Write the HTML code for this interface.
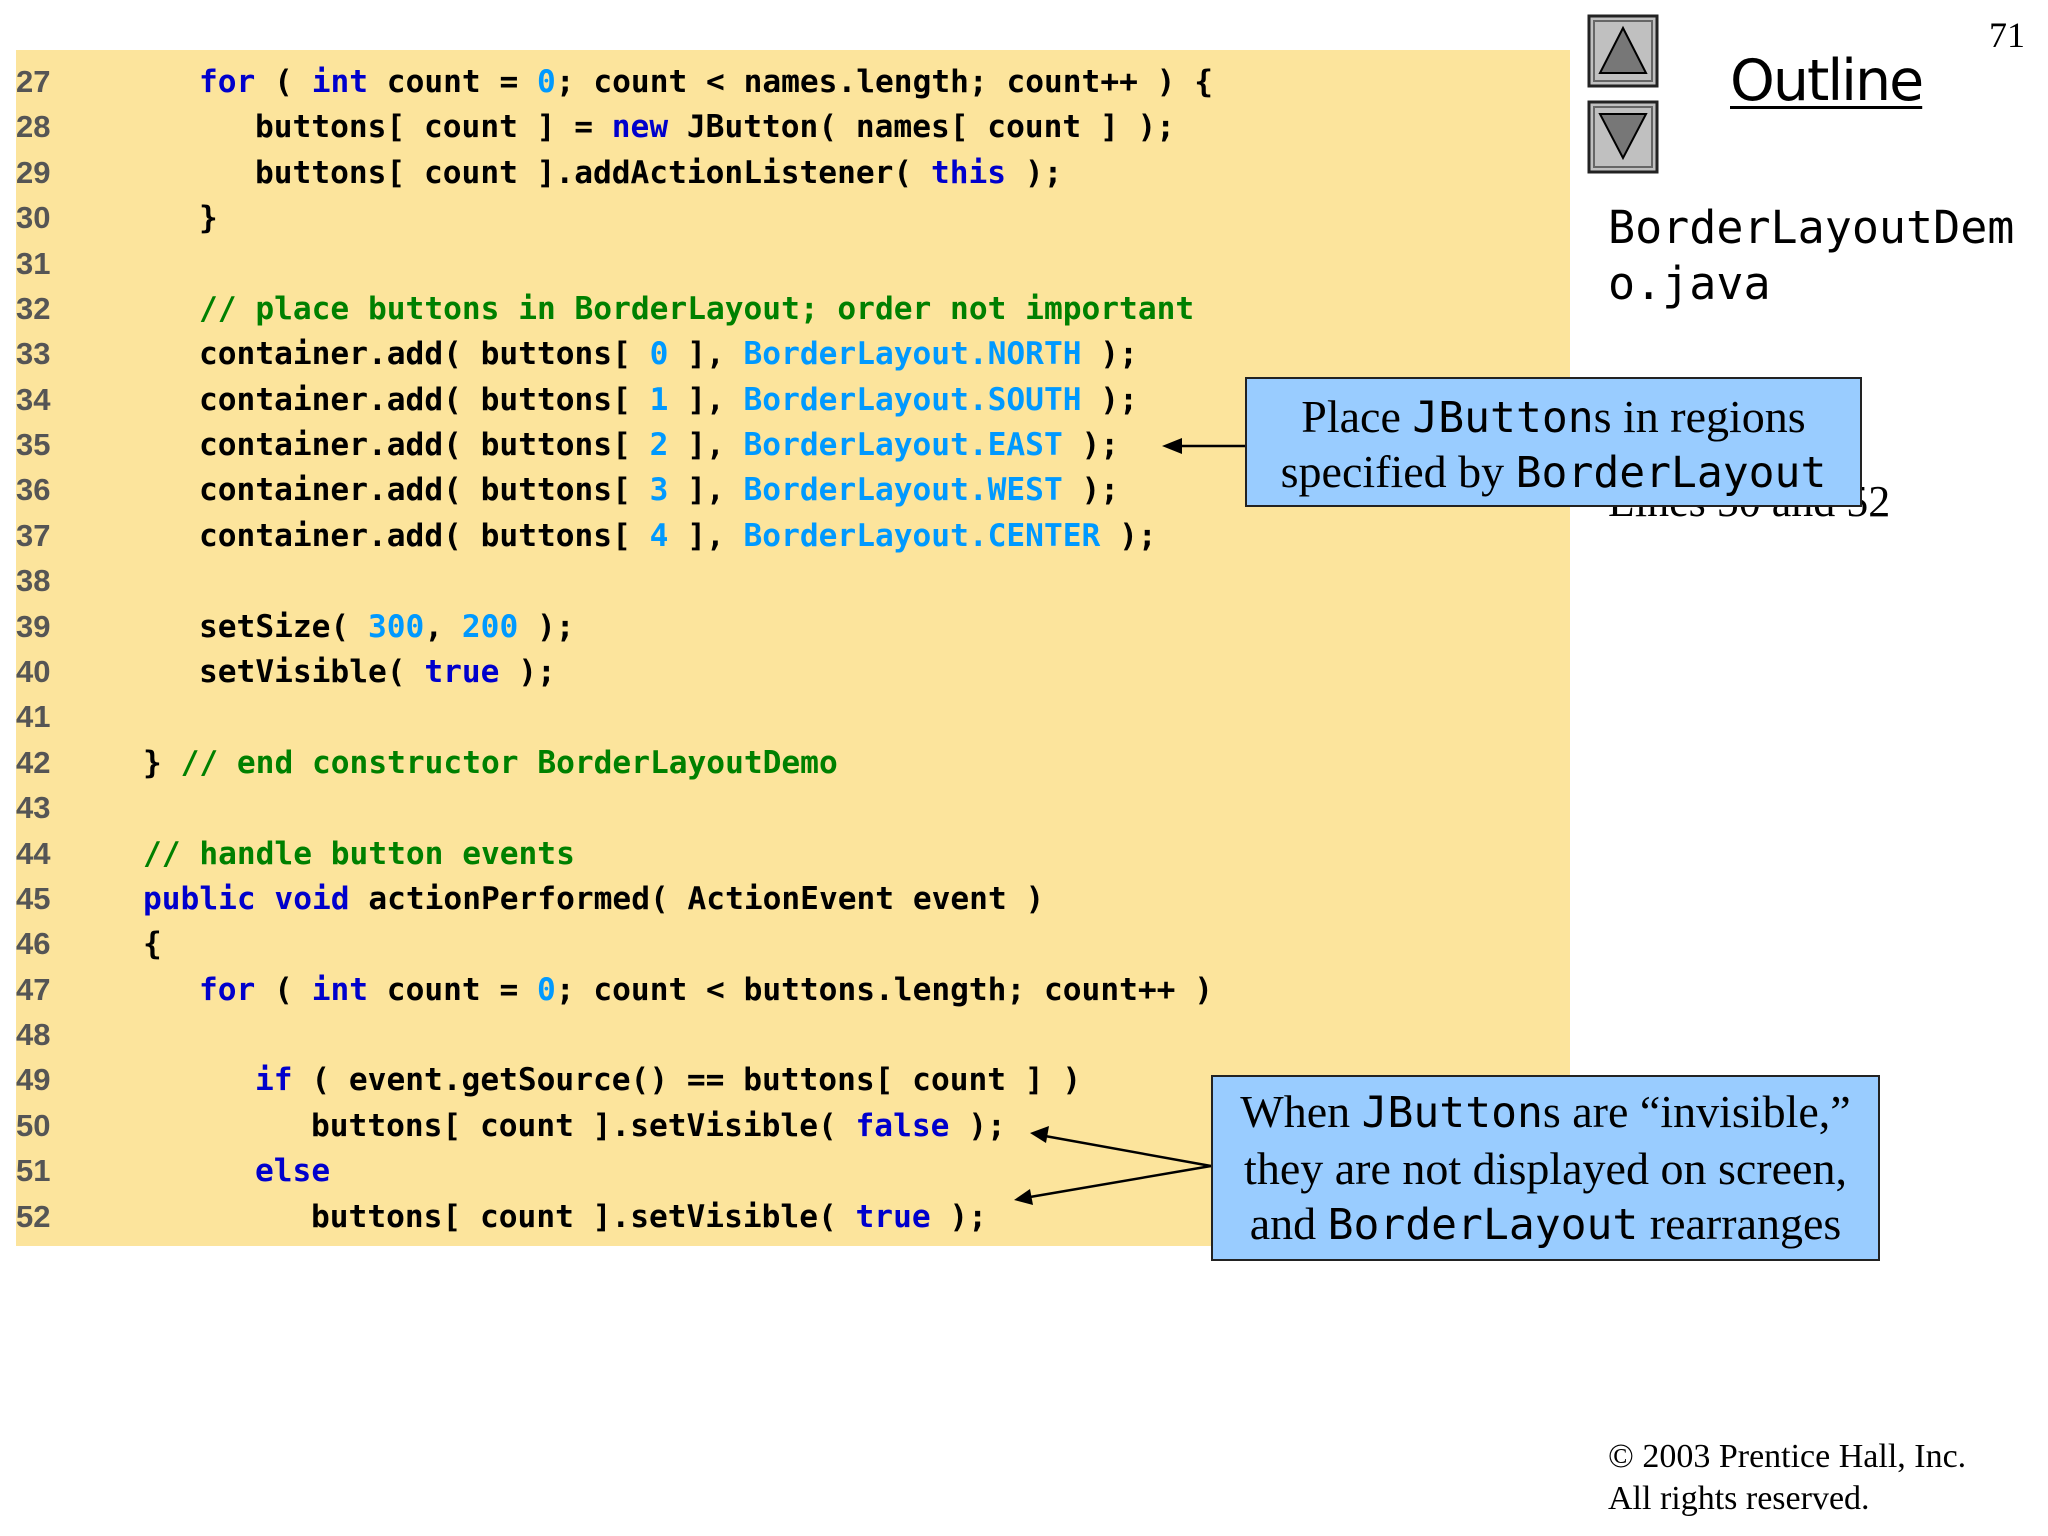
<!DOCTYPE html>
<html><head><meta charset="utf-8"><style>
body{margin:0;width:2048px;height:1536px;background:#fff;position:relative;overflow:hidden}
.code{position:absolute;left:16px;top:50px;background:#FCE49C;width:1554px;height:1196px}
.ln{position:absolute;left:16px;font:bold 31px "Liberation Sans",sans-serif;color:#555;line-height:46px}
.c{position:absolute;left:0;font:bold 31.2px "DejaVu Sans Mono","Liberation Mono",monospace;color:#000;white-space:pre;line-height:46px}
.k{color:#0000CC}.n{color:#0099FF}.g{color:#008000}
.mono{font-family:"DejaVu Sans Mono","Liberation Mono",monospace}
.box{position:absolute;background:#99CCFF;border:2px solid #222;box-sizing:border-box;text-align:center;font:46px "Liberation Serif",serif;color:#000;white-space:nowrap}
.box .mono{font-size:43px}
</style></head><body>
<div class="code"></div>
<div style="position:absolute;left:0;top:0">
<div class="ln" style="top:59px">27</div><div class="c" style="top:59px;left:199px"><span class="k">for</span> ( <span class="k">int</span> count = <span class="n">0</span>; count &lt; names.length; count++ ) {</div>
<div class="ln" style="top:104.4px">28</div><div class="c" style="top:104.4px;left:255px">buttons[ count ] = <span class="k">new</span> JButton( names[ count ] );</div>
<div class="ln" style="top:149.8px">29</div><div class="c" style="top:149.8px;left:255px">buttons[ count ].addActionListener( <span class="k">this</span> );</div>
<div class="ln" style="top:195.1px">30</div><div class="c" style="top:195.1px;left:199px">}</div>
<div class="ln" style="top:240.5px">31</div>
<div class="ln" style="top:285.9px">32</div><div class="c g" style="top:285.9px;left:199px">// place buttons in BorderLayout; order not important</div>
<div class="ln" style="top:331.3px">33</div><div class="c" style="top:331.3px;left:199px">container.add( buttons[ <span class="n">0</span> ], <span class="n">BorderLayout.NORTH</span> );</div>
<div class="ln" style="top:376.7px">34</div><div class="c" style="top:376.7px;left:199px">container.add( buttons[ <span class="n">1</span> ], <span class="n">BorderLayout.SOUTH</span> );</div>
<div class="ln" style="top:422px">35</div><div class="c" style="top:422px;left:199px">container.add( buttons[ <span class="n">2</span> ], <span class="n">BorderLayout.EAST</span> );</div>
<div class="ln" style="top:467.4px">36</div><div class="c" style="top:467.4px;left:199px">container.add( buttons[ <span class="n">3</span> ], <span class="n">BorderLayout.WEST</span> );</div>
<div class="ln" style="top:512.8px">37</div><div class="c" style="top:512.8px;left:199px">container.add( buttons[ <span class="n">4</span> ], <span class="n">BorderLayout.CENTER</span> );</div>
<div class="ln" style="top:558.2px">38</div>
<div class="ln" style="top:603.6px">39</div><div class="c" style="top:603.6px;left:199px">setSize( <span class="n">300</span>, <span class="n">200</span> );</div>
<div class="ln" style="top:648.9px">40</div><div class="c" style="top:648.9px;left:199px">setVisible( <span class="k">true</span> );</div>
<div class="ln" style="top:694.3px">41</div>
<div class="ln" style="top:739.7px">42</div><div class="c" style="top:739.7px;left:143px">} <span class="g">// end constructor BorderLayoutDemo</span></div>
<div class="ln" style="top:785.1px">43</div>
<div class="ln" style="top:830.5px">44</div><div class="c g" style="top:830.5px;left:143px">// handle button events</div>
<div class="ln" style="top:875.8px">45</div><div class="c" style="top:875.8px;left:143px"><span class="k">public void</span> actionPerformed( ActionEvent event )</div>
<div class="ln" style="top:921.2px">46</div><div class="c" style="top:921.2px;left:143px">{</div>
<div class="ln" style="top:966.6px">47</div><div class="c" style="top:966.6px;left:199px"><span class="k">for</span> ( <span class="k">int</span> count = <span class="n">0</span>; count &lt; buttons.length; count++ )</div>
<div class="ln" style="top:1012px">48</div>
<div class="ln" style="top:1057.4px">49</div><div class="c" style="top:1057.4px;left:255px"><span class="k">if</span> ( event.getSource() == buttons[ count ] )</div>
<div class="ln" style="top:1102.7px">50</div><div class="c" style="top:1102.7px;left:311px">buttons[ count ].setVisible( <span class="k">false</span> );</div>
<div class="ln" style="top:1148.1px">51</div><div class="c" style="top:1148.1px;left:255px"><span class="k">else</span></div>
<div class="ln" style="top:1193.5px">52</div><div class="c" style="top:1193.5px;left:311px">buttons[ count ].setVisible( <span class="k">true</span> );</div>
</div>

<svg style="position:absolute;left:0;top:0" width="2048" height="1536">
<g stroke="#000" stroke-width="2" transform="translate(-9,0)">
<rect x="1598" y="16" width="68" height="70" fill="#C0C0C0" stroke="#222" stroke-width="3"/>
<rect x="1603" y="21" width="58" height="60" fill="none" stroke="#666" stroke-width="2"/>
<polygon points="1632,28 1609,73 1655,73" fill="#777"/>
<rect x="1598" y="102" width="68" height="70" fill="#C0C0C0" stroke="#222" stroke-width="3"/>
<rect x="1603" y="107" width="58" height="60" fill="none" stroke="#666" stroke-width="2"/>
<polygon points="1609,114 1655,114 1632,158" fill="#777"/>
</g>
<g stroke="#000" stroke-width="2.5" fill="#000">
<line x1="1246" y1="446" x2="1180" y2="446"/>
<polygon points="1162,446 1182,438 1182,454" stroke="none"/>
<line x1="1211" y1="1166" x2="1045" y2="1136"/>
<polygon points="1030,1133 1049,1126 1046,1143" stroke="none"/>
<line x1="1211" y1="1166" x2="1030" y2="1197"/>
<polygon points="1014,1200 1030,1189 1033,1205" stroke="none"/>
</g>
</svg>

<div style="position:absolute;left:1989px;top:14px;font:36px 'Liberation Serif',serif">71</div>
<div style="position:absolute;left:1730px;top:48px;font:57px 'DejaVu Sans','Liberation Sans',sans-serif;text-decoration:underline;text-decoration-thickness:3px;text-underline-offset:6px;letter-spacing:-2px">Outline</div>
<div style="position:absolute;left:1608px;top:200px;font:45px 'DejaVu Sans Mono','Liberation Mono',monospace;line-height:56px">BorderLayoutDem<br>o.java</div>
<div style="position:absolute;left:1608px;top:476px;font:44px 'Liberation Serif',serif">Lines 50 and 52</div>

<div class="box" style="left:1245px;top:377px;width:617px;height:130px;padding-top:11px;line-height:54px">Place <span class="mono">JButton</span>s in regions<br>specified by <span class="mono">BorderLayout</span></div>
<div class="box" style="left:1211px;top:1075px;width:669px;height:186px;padding-top:7px;line-height:55px">When <span class="mono">JButton</span>s are “invisible,”<br>they are not displayed on screen,<br>and <span class="mono">BorderLayout</span> rearranges</div>

<div style="position:absolute;left:1608px;top:1436px;font:34px 'Liberation Serif',serif;line-height:42px">© 2003 Prentice Hall, Inc.<br>All rights reserved.</div>
</body></html>
